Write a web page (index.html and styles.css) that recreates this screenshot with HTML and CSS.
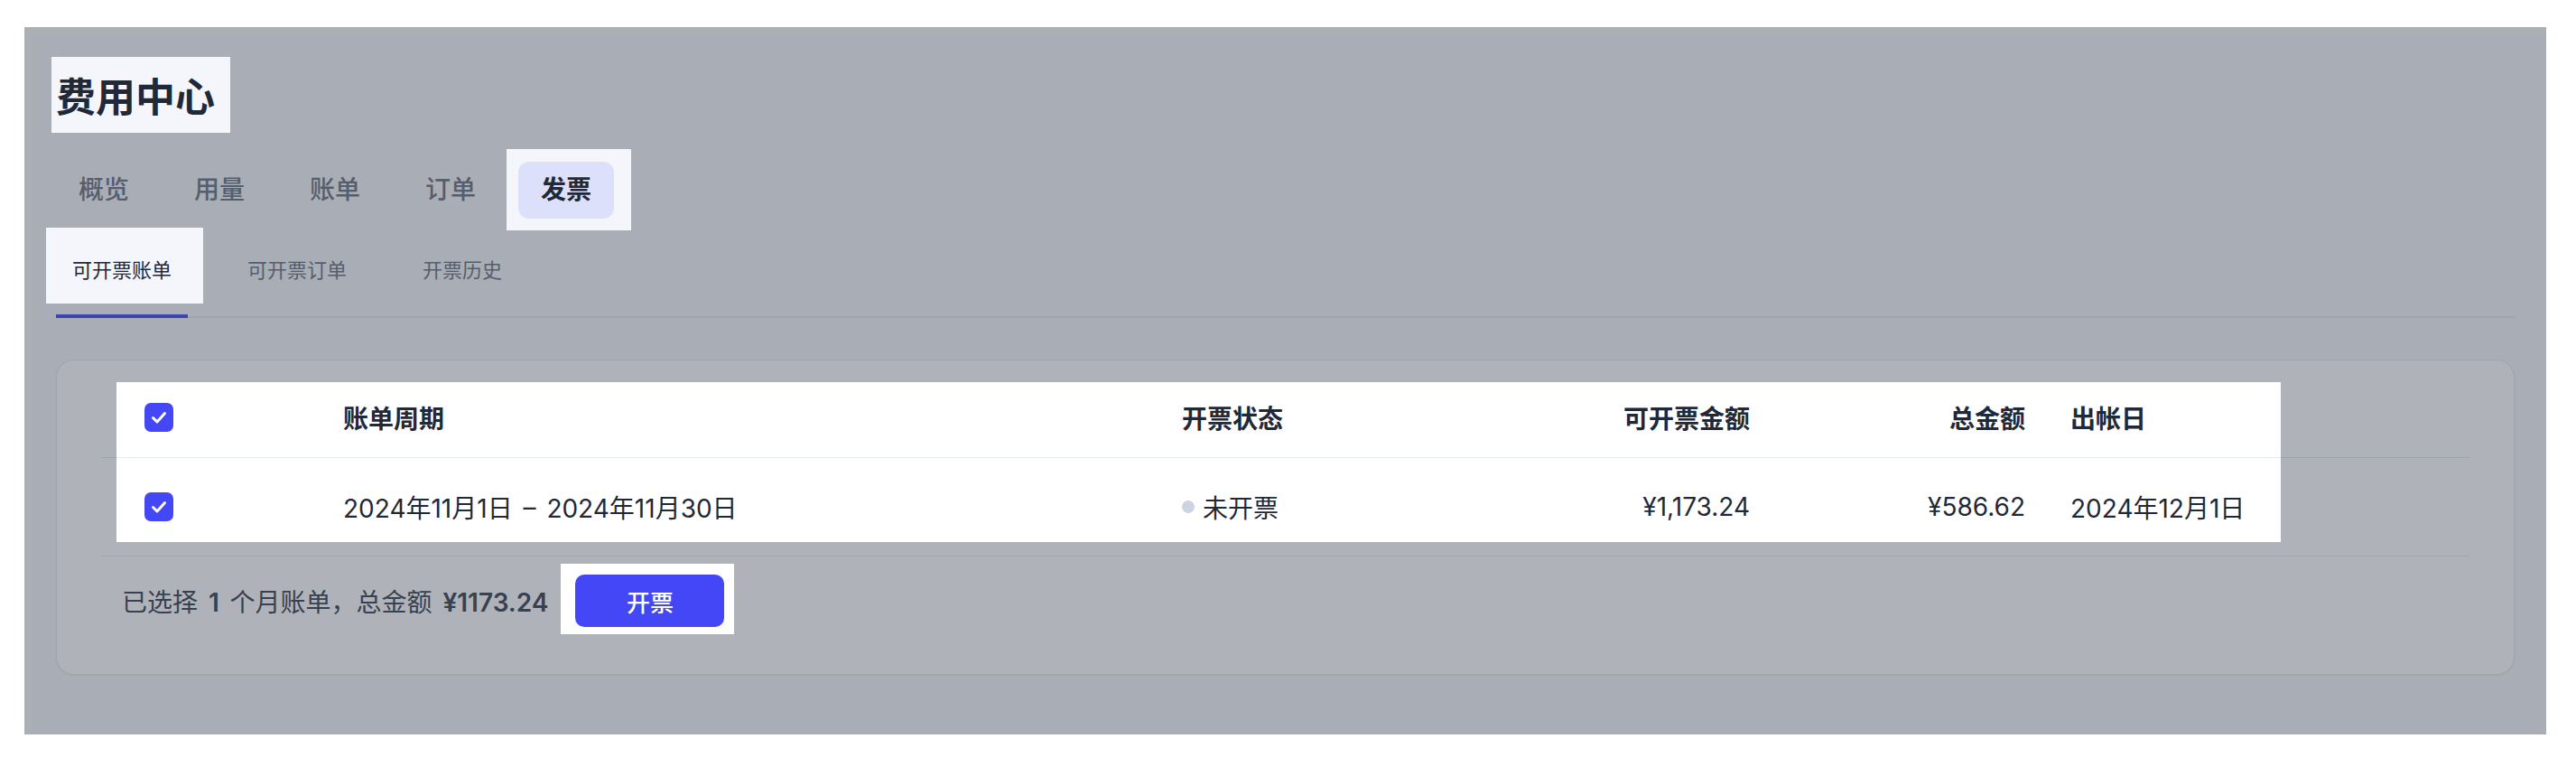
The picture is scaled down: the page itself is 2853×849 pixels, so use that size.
FILE: index.html
```html
<!DOCTYPE html>
<html lang="zh-CN">
<head>
    <meta charset="UTF-8">
    <meta name="viewport" content="width=device-width, initial-scale=1.0">
    <title>费用中心 - 发票</title>
    <link rel="stylesheet" href="styles.css">
</head>
<body>
    <div class="frame">
        <main class="page">
            <h1 class="title">费用中心</h1>

            <nav class="tabs">
                <a href="#" class="tab">概览</a>
                <a href="#" class="tab">用量</a>
                <a href="#" class="tab">账单</a>
                <a href="#" class="tab">订单</a>
                <a href="#" class="tab active">发票</a>
            </nav>

            <nav class="subtabs">
                <a href="#" class="subtab active">可开票账单</a>
                <a href="#" class="subtab">可开票订单</a>
                <a href="#" class="subtab">开票历史</a>
            </nav>

            <section class="card">
                <div class="table">
                    <div class="row head">
                        <span class="cell">
                            <svg class="check" width="32" height="32" viewBox="0 0 32 32"><rect width="32" height="32" rx="7" fill="#4447f5"/><path d="M9.5 16.5l4.5 4.5 8.5-9.5" fill="none" stroke="#fff" stroke-width="3" stroke-linecap="round" stroke-linejoin="round"/></svg>
                        </span>
                        <span class="cell">账单周期</span>
                        <span class="cell">开票状态</span>
                        <span class="cell num">可开票金额</span>
                        <span class="cell num">总金额</span>
                        <span class="cell date">出帐日</span>
                    </div>
                    <div class="row">
                        <span class="cell">
                            <svg class="check" width="32" height="32" viewBox="0 0 32 32"><rect width="32" height="32" rx="7" fill="#4447f5"/><path d="M9.5 16.5l4.5 4.5 8.5-9.5" fill="none" stroke="#fff" stroke-width="3" stroke-linecap="round" stroke-linejoin="round"/></svg>
                        </span>
                        <span class="cell period">2024年11月1日 – 2024年11月30日</span>
                        <span class="cell status"><i class="dot"></i>未开票</span>
                        <span class="cell num">¥1,173.24</span>
                        <span class="cell num">¥586.62</span>
                        <span class="cell date">2024年12月1日</span>
                    </div>
                </div>
                <div class="footer">
                    <p class="summary">已选择 <strong>1</strong> 个月账单，总金额 <strong>¥1173.24</strong></p>
                    <button type="button" class="btn">开票</button>
                </div>
            </section>
        </main>

        <!-- 引导遮罩：高亮区域为镂空 -->
        <svg class="spotlight" width="2793" height="783" viewBox="0 0 2793 783">
            <path fill-rule="evenodd" fill="rgba(55,65,81,0.4)" d="M0 0H2793V783H0Z M30 33h198v84h-198Z M534 135h138v90h-138Z M24 222h174v84h-174Z M102 393h2397v177h-2397Z M594 594h192v78h-192Z"/>
        </svg>
    </div>
</body>
</html>
```

FILE: styles.css
```css
body {
    margin: 0;
    background: #ffffff;
    font-family: Inter, "Noto Sans CJK SC", sans-serif;
    color: #1f2937;
}
.frame {
    position: relative;
    box-sizing: border-box;
    width: 2793px;
    height: 783px;
    margin: 30px 0 0 27px;
    background: #f5f6fb;
    border-top: 6px solid #fbf9f6;
    border-left: 6px solid #fbf9f6;
}
.page {
    padding: 46px 35px 0 29px;
}
.title {
    margin: 0;
    font-size: 44px;
    line-height: 52px;
    font-weight: 700;
    color: #1f2937;
}
.tabs {
    display: flex;
    gap: 22px;
    margin-top: 45px;
}
.tab {
    display: block;
    height: 63px;
    padding: 0 25px;
    line-height: 63px;
    font-size: 28px;
    font-weight: 500;
    color: #6b7280;
    text-decoration: none;
    border-radius: 12px;
}
.tab.active {
    background: #dde0fb;
    color: #1f2937;
    font-weight: 600;
}
.subtabs {
    display: flex;
    gap: 48px;
    margin-top: 10px;
    border-bottom: 2px solid #e5e7eb;
}
.subtab {
    display: block;
    padding: 31px 18px 33px;
    margin-bottom: -2px;
    line-height: 32px;
    font-size: 22px;
    color: #6b7280;
    text-decoration: none;
    border-bottom: 4px solid transparent;
}
.subtab.active {
    color: #1f2937;
    border-bottom-color: #4046f0;
}
.card {
    margin-top: 46px;
    height: 349px;
    box-sizing: border-box;
    padding: 19px 49px 0;
    background: #ffffff;
    border: 1px solid #e5e7eb;
    border-radius: 20px;
    box-shadow: 0 1px 3px rgba(0, 0, 0, 0.05);
}
.row {
    display: grid;
    grid-template-columns: 220px 929px 391px 238px 305px 1fr;
    align-items: center;
    height: 108px;
    padding-left: 48px;
    border-bottom: 1px solid #e2e8f0;
    font-size: 28px;
    color: #1f2937;
}
.row.head {
    height: 88px;
    font-weight: 600;
}
.cell {
    display: flex;
    align-items: center;
}
.cell.period {
    white-space: pre;
    word-spacing: 4px;
}
.cell.num {
    justify-content: flex-end;
}
.cell.date {
    padding-left: 50px;
}
.check {
    display: block;
}
.dot {
    width: 14px;
    height: 14px;
    margin-right: 9px;
    border-radius: 50%;
    background: #cbd5e1;
}
.footer {
    display: flex;
    align-items: center;
    gap: 30px;
    padding: 20px 0 0 23px;
}
.summary {
    margin: 0;
    font-size: 28px;
    word-spacing: 4px;
    color: #374151;
}
.summary strong {
    font-weight: 600;
}
.btn {
    width: 165px;
    height: 58px;
    border: none;
    border-radius: 10px;
    background: #4447f5;
    color: #ffffff;
    font-family: inherit;
    font-size: 26px;
    font-weight: 500;
    cursor: pointer;
}
.spotlight {
    position: absolute;
    top: -6px;
    left: -6px;
    pointer-events: none;
}
```
